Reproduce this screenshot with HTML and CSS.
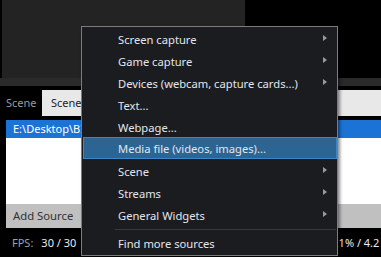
FILE: index.html
```html
<!DOCTYPE html>
<html lang="en">
<head>
    <meta charset="UTF-8">
    <title>Add Source</title>
    <link rel="stylesheet" href="styles.css">
</head>
<body>
    <div class="preview">
        <div class="preview-canvas"></div>
        <div class="preview-empty"></div>
    </div>
    <div class="splitter"></div>

    <div class="dock">
        <div class="tab-row">
            <span class="tab-label">Scene</span>
            <div class="tab-bar">
                <span class="tab">Scene</span>
            </div>
        </div>

        <div class="source-list">
            <div class="source-item selected"><span class="source-name">E:\Desktop\BIT\clip.mp4</span></div>
        </div>
        <div class="add-source">Add Source</div>

        <div class="status-bar">
            <span class="fps-label">FPS:</span>
            <span class="fps-value">30 / 30</span>
            <span class="cpu-value">0.1% / 4.2</span>
        </div>
    </div>

    <!-- context menu over the dock -->
    <div class="menu">
        <div class="menu-item has-sub">Screen capture</div>
        <div class="menu-item has-sub">Game capture</div>
        <div class="menu-item has-sub">Devices (webcam, capture cards...)</div>
        <div class="menu-item">Text...</div>
        <div class="menu-item">Webpage...</div>
        <div class="menu-item active">Media file (videos, images)...</div>
        <div class="menu-item has-sub">Scene</div>
        <div class="menu-item has-sub">Streams</div>
        <div class="menu-item has-sub">General Widgets</div>
        <div class="menu-separator"></div>
        <div class="menu-item">Find more sources</div>
    </div>
</body>
</html>
```

FILE: styles.css
```css
body {
    margin: 0;
    width: 381px;
    height: 257px;
    overflow: hidden;
    background-color: #000;
    font-family: 'Noto Sans', 'Open Sans', sans-serif;
    font-size: 11px;
    position: relative;
}

.preview {
    display: flex;
    height: 78px;
}

.preview-canvas {
    width: 243px;
    border-left: 2px solid #000;
    background-color: #232323;
}

.preview-empty {
    flex: 1;
    background-color: #000;
}

.splitter {
    height: 8px;
    background-color: #2a2a2a;
}

.dock {
    background-color: #000;
}

.tab-row {
    display: flex;
    align-items: stretch;
    height: 26px;
    margin-top: 4px;
}

.tab-label {
    width: 36px;
    padding-left: 6px;
    line-height: 26px;
    color: #9a9a9a;
}

.tab-bar {
    flex: 1;
    background-color: #e8e8e8;
}

.tab {
    display: inline-block;
    padding-left: 9px;
    line-height: 26px;
    color: #222;
}

.source-list {
    margin: 4px 0 0 6px;
    height: 84px;
    background-color: #fff;
}

.source-item {
    height: 18px;
    line-height: 18px;
    padding-left: 7px;
}

.source-name {
    display: block;
    width: 68px;
    white-space: nowrap;
    overflow: hidden;
}

.source-item.selected {
    background-color: #1c73d6;
    color: #fff;
}

.add-source {
    margin-left: 6px;
    height: 24px;
    line-height: 24px;
    padding-left: 7px;
    background-color: #c0c0c0;
    color: #333;
    font-size: 11.3px;
}

.status-bar {
    display: flex;
    height: 29px;
    align-items: center;
    padding-left: 12px;
    white-space: nowrap;
}

.fps-label {
    color: #93a4b6;
}

.fps-value {
    margin-left: 8px;
    color: #e6edf4;
}

.cpu-value {
    margin-left: 253px;
    color: #e6edf4;
}

.menu {
    position: absolute;
    left: 81px;
    top: 26px;
    width: 255px;
    height: 227px;
    padding-top: 1px;
    box-sizing: content-box;
    border: 1px solid #7c7c7c;
    background-color: #1b1c20;
    box-shadow: 2px 2px 3px rgba(0, 0, 0, 0.45);
    font-size: 11.2px;
}

.menu-item {
    position: relative;
    height: 22px;
    line-height: 21px;
    margin-left: 1px;
    padding-left: 34px;
    box-sizing: border-box;
    color: #e2e6ec;
    border: 1px solid transparent;
}

.menu-item.active {
    height: 22px;
    margin-top: -1px;
    margin-bottom: 1px;
    background-color: #2c6592;
    border-color: #3a86c6;
}

.has-sub::after {
    content: "";
    position: absolute;
    left: 239px;
    top: 6px;
    border-left: 4px solid #9a9a9a;
    border-top: 3.5px solid transparent;
    border-bottom: 3.5px solid transparent;
}

.menu-separator {
    height: 1px;
    margin: 3px 1px 2px 33px;
    background-color: #3a3a3a;
}
```
